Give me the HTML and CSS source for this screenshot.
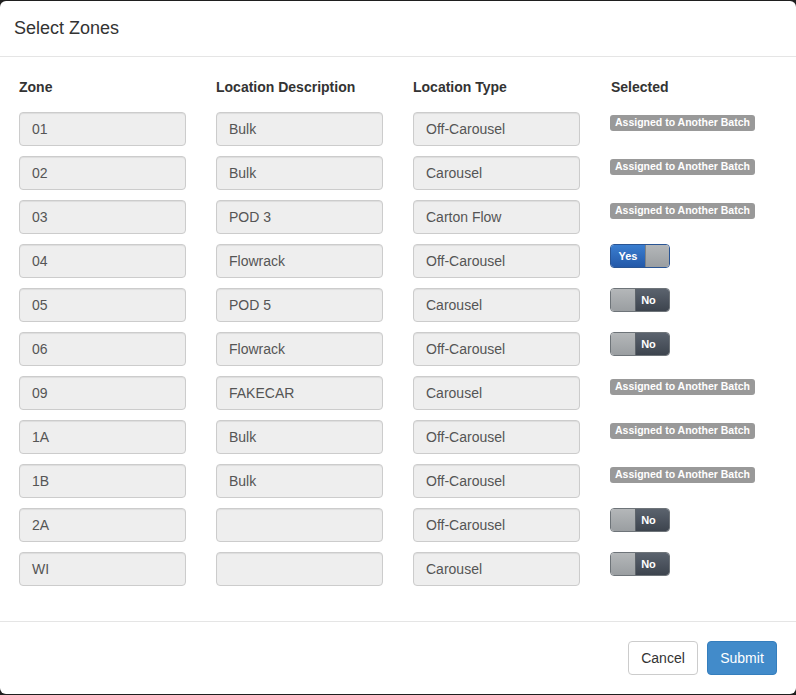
FILE: index.html
```html
<!DOCTYPE html>
<html>
<head>
<meta charset="utf-8">
<title>Select Zones</title>
<link rel="stylesheet" href="styles.css">
</head>
<body>
<div class="modal">
  <div class="modal-header">
    <h4 class="modal-title">Select Zones</h4>
  </div>
  <div class="modal-body">
    <div class="zone-grid">
      <div class="col-label">Zone</div>
      <div class="col-label">Location Description</div>
      <div class="col-label">Location Type</div>
      <div class="col-label">Selected</div>

      <div class="field">01</div><div class="field">Bulk</div><div class="field">Off-Carousel</div>
      <div class="sel"><span class="badge">Assigned to Another Batch</span></div>

      <div class="field">02</div><div class="field">Bulk</div><div class="field">Carousel</div>
      <div class="sel"><span class="badge">Assigned to Another Batch</span></div>

      <div class="field">03</div><div class="field">POD 3</div><div class="field">Carton Flow</div>
      <div class="sel"><span class="badge">Assigned to Another Batch</span></div>

      <div class="field">04</div><div class="field">Flowrack</div><div class="field">Off-Carousel</div>
      <div class="sel"><span class="switch on"><span class="sw-on">Yes</span><span class="sw-handle"></span></span></div>

      <div class="field">05</div><div class="field">POD 5</div><div class="field">Carousel</div>
      <div class="sel"><span class="switch off"><span class="sw-handle"></span><span class="sw-off">No</span></span></div>

      <div class="field">06</div><div class="field">Flowrack</div><div class="field">Off-Carousel</div>
      <div class="sel"><span class="switch off"><span class="sw-handle"></span><span class="sw-off">No</span></span></div>

      <div class="field">09</div><div class="field">FAKECAR</div><div class="field">Carousel</div>
      <div class="sel"><span class="badge">Assigned to Another Batch</span></div>

      <div class="field">1A</div><div class="field">Bulk</div><div class="field">Off-Carousel</div>
      <div class="sel"><span class="badge">Assigned to Another Batch</span></div>

      <div class="field">1B</div><div class="field">Bulk</div><div class="field">Off-Carousel</div>
      <div class="sel"><span class="badge">Assigned to Another Batch</span></div>

      <div class="field">2A</div><div class="field"></div><div class="field">Off-Carousel</div>
      <div class="sel"><span class="switch off"><span class="sw-handle"></span><span class="sw-off">No</span></span></div>

      <div class="field">WI</div><div class="field"></div><div class="field">Carousel</div>
      <div class="sel"><span class="switch off"><span class="sw-handle"></span><span class="sw-off">No</span></span></div>
    </div>
  </div>
  <div class="modal-footer">
    <button class="btn btn-default">Cancel</button>
    <button class="btn btn-primary">Submit</button>
  </div>
</div>
</body>
</html>
```

FILE: styles.css
```css
html, body {
  margin: 0;
  padding: 0;
}
body {
  background: #1f1f1f;
  font-family: "Liberation Sans", Arial, sans-serif;
  font-size: 14px;
  color: #333;
  width: 796px;
  height: 695px;
  overflow: hidden;
}
.modal {
  margin-top: 1px;
  height: 693px;
  background: #fff;
  border-radius: 6px;
  display: flex;
  flex-direction: column;
}
.modal-header {
  padding: 15px 14px;
  height: 25px;
  border-bottom: 1px solid #e5e5e5;
}
.modal-title {
  margin: 0;
  font-size: 18px;
  font-weight: normal;
  line-height: 25px;
  color: #333;
}
.modal-body {
  padding: 20px 19px 35px;
  flex: 1;
}
.zone-grid {
  display: grid;
  grid-template-columns: 167px 167px 167px auto;
  column-gap: 30px;
  row-gap: 10px;
  grid-template-rows: 25px;
  grid-auto-rows: 34px;
}
.col-label {
  font-weight: bold;
  line-height: 20px;
  color: #333;
}
.col-label:nth-child(4) {
  padding-left: 1px;
}
.field {
  box-sizing: border-box;
  height: 34px;
  padding: 6px 12px;
  line-height: 20px;
  background: #eee;
  border: 1px solid #ccc;
  border-radius: 4px;
  color: #555;
  font-size: 14px;
  box-shadow: inset 0 1px 1px rgba(0,0,0,.075);
}
.sel {
  display: flex;
  align-items: flex-start;
}
.badge {
  margin-top: 3px;
  display: inline-block;
  background: #999;
  color: #fff;
  font-weight: bold;
  font-size: 10.5px;
  line-height: 1;
  padding: 2px 5px 3px;
  border-radius: 3px;
  white-space: nowrap;
}
.switch {
  display: inline-flex;
  box-sizing: border-box;
  width: 60px;
  height: 24px;
  border: 1px solid #6e7479;
  border-radius: 4px;
  overflow: hidden;
  font-weight: bold;
  font-size: 11px;
  color: #fff;
}
.switch.on {
  border-color: #2a5594;
}
.sw-on {
  width: 34px;
  background: linear-gradient(#3a7ed0, #2459a9);
  display: flex;
  align-items: center;
  justify-content: center;
}
.sw-off {
  flex: 1;
  padding-right: 8px;
  background: linear-gradient(#5b636e, #3d444e);
  display: flex;
  align-items: center;
  justify-content: center;
}
.sw-handle {
  width: 24px;
  flex: none;
  background: linear-gradient(#b4b7b9, #9a9ea1);
}
.switch.on .sw-handle {
  flex: 1;
  border-left: 1px solid #7d8286;
}
.switch.off .sw-handle {
  border-right: 1px solid #5e646a;
}
.modal-footer {
  border-top: 1px solid #e5e5e5;
  padding: 19px 19px 19px;
  display: flex;
  justify-content: flex-end;
  gap: 9px;
}
.btn {
  box-sizing: border-box;
  height: 34px;
  width: 70px;
  font-family: "Liberation Sans", Arial, sans-serif;
  font-size: 14px;
  line-height: 20px;
  padding: 6px 12px;
  border-radius: 4px;
  border: 1px solid #ccc;
  cursor: pointer;
}
.btn-default {
  background: #fff;
  color: #333;
}
.btn-primary {
  background: #428bca;
  border-color: #357ebd;
  color: #fff;
}
```
